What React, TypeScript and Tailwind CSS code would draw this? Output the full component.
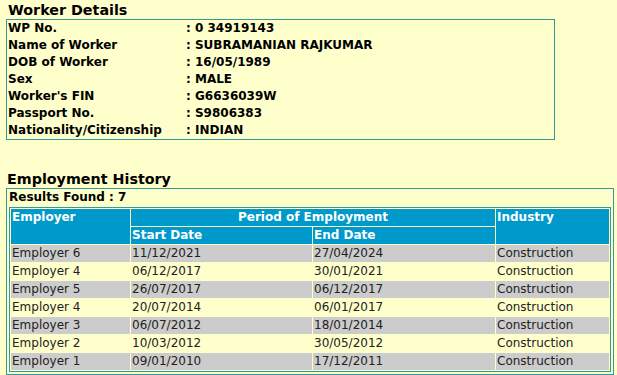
import React from "react";

const details: [string, string][] = [
  ["WP No.", ": 0 34919143"],
  ["Name of Worker", ": SUBRAMANIAN RAJKUMAR"],
  ["DOB of Worker", ": 16/05/1989"],
  ["Sex", ": MALE"],
  ["Worker's FIN", ": G6636039W"],
  ["Passport No.", ": S9806383"],
  ["Nationality/Citizenship", ": INDIAN"],
];

const history: [string, string, string, string][] = [
  ["Employer 6", "11/12/2021", "27/04/2024", "Construction"],
  ["Employer 4", "06/12/2017", "30/01/2021", "Construction"],
  ["Employer 5", "26/07/2017", "06/12/2017", "Construction"],
  ["Employer 4", "20/07/2014", "06/01/2017", "Construction"],
  ["Employer 3", "06/07/2012", "18/01/2014", "Construction"],
  ["Employer 2", "10/03/2012", "30/05/2012", "Construction"],
  ["Employer 1", "09/01/2010", "17/12/2011", "Construction"],
];

export default function App() {
  return (
    <div
      className="min-h-screen bg-[#ffffcc] pl-[6px] text-black"
      style={{ fontFamily: '"DejaVu Sans", Verdana, sans-serif' }}
    >
      <div className="h-[19px] pl-[2px] pt-[1px] text-[14.3px] font-bold leading-[18px]">
        Worker Details
      </div>
      <div className="w-[549px] border border-[#339999] pl-[1px]">
        {details.map(([k, v]) => (
          <div key={k} className="flex h-[17px] text-[12px] font-bold leading-[17px]">
            <div className="w-[178px] shrink-0">{k}</div>
            <div>{v}</div>
          </div>
        ))}
      </div>
      <div className="mt-[29px] h-[19px] pl-[1px] pt-[1px] text-[14.3px] font-bold leading-[18px]">
        Employment History
      </div>
      <div className="w-[608px] border border-[#339999] px-[2px] pb-[2px]">
        <div className="h-[18px] pl-0 text-[12px] font-bold leading-[17px]">Results Found : 7</div>
        <table className="w-full border-separate border-spacing-[1px] border border-[#339999] text-[12px] leading-[17px]">
          <thead>
            <tr className="bg-[#0099cc] text-white font-bold">
              <th rowSpan={2} className="w-[119px] h-[17px] px-[1px] text-left align-top font-bold">
                Employer
              </th>
              <th colSpan={2} className="h-[17px] px-[1px] text-center align-top font-bold">
                Period of Employment
              </th>
              <th rowSpan={2} className="w-[113px] px-[1px] text-left align-top font-bold">
                Industry
              </th>
            </tr>
            <tr className="bg-[#0099cc] text-white">
              <th className="w-[181px] h-[17px] px-[1px] text-left font-bold">Start Date</th>
              <th className="w-[182px] h-[17px] px-[1px] text-left font-bold">End Date</th>
            </tr>
          </thead>
          <tbody>
            {history.map((r, i) => (
              <tr key={i} className={i % 2 === 0 ? "bg-[#cccccc] text-[#222]" : "bg-[#ffffcc] text-[#222]"}>
                {r.map((c, j) => (
                  <td key={j} className="h-[17px] p-0 pl-[1px]">
                    {c}
                  </td>
                ))}
              </tr>
            ))}
          </tbody>
        </table>
      </div>
    </div>
  );
}
